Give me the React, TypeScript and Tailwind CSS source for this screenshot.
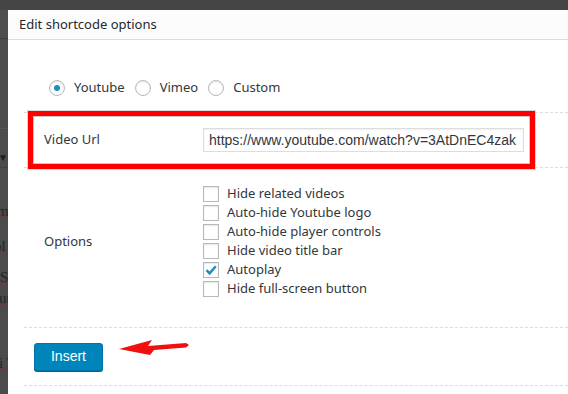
import { useState } from 'react'

const OPTIONS = [
  { label: 'Hide related videos', checked: false },
  { label: 'Auto-hide Youtube logo', checked: false },
  { label: 'Auto-hide player controls', checked: false },
  { label: 'Hide video title bar', checked: false },
  { label: 'Autoplay', checked: true },
  { label: 'Hide full-screen button', checked: false },
]

function Radio({ label, on }: { label: string; on?: boolean }) {
  return (
    <label className="flex items-center mr-[10px]">
      <span className="w-4 h-4 rounded-full border border-[#b4b9be] bg-white shadow-[inset_0_1px_2px_rgba(0,0,0,0.1)] flex items-center justify-center">
        {on && <span className="w-[6px] h-[6px] rounded-full bg-[#1e8cbe]" />}
      </span>
      <span className="ml-[9px]">{label}</span>
    </label>
  )
}

function Check({ label, checked }: { label: string; checked: boolean }) {
  return (
    <div className="h-[19px] flex items-center">
      <span className="w-4 h-4 border border-[#b4b9be] bg-white shadow-[inset_0_1px_2px_rgba(0,0,0,0.1)] flex items-center justify-center">
        {checked && (
          <svg width="14" height="14" viewBox="0 0 14 14">
            <path d="M2.5 7.2 L5.6 10.4 L11.8 3.2" fill="none" stroke="#1e8cbe" strokeWidth="2.4" />
          </svg>
        )}
      </span>
      <span className="ml-[8px]">{label}</span>
    </div>
  )
}

export default function App() {
  const [url] = useState('https://www.youtube.com/watch?v=3AtDnEC4zak')

  return (
    <div className="w-[568px] h-[394px] overflow-hidden bg-[#4b4b4b] flex flex-col font-['Noto_Sans',sans-serif]">
      {/* admin bar behind overlay */}
      <div className="h-[10px] bg-[#454545] shrink-0" />

      <div className="flex flex-1 min-h-0">
        {/* page behind the modal, dimmed */}
        <div className="w-[8px] shrink-0 overflow-hidden flex flex-col text-[#262626] font-['Liberation_Serif',serif] text-[15px] leading-none">
          <div className="h-[29px] border-b border-[#3f3f3f] bg-[#4e4e4e]" />
          <div className="h-[90px] border-b border-[#555]" />
          <div className="mt-[24px] text-[10px] text-[#1d1d1d] -ml-[2px]">▼</div>
          <div className="mt-[4px] border-b border-[#404040]" />
          <div className="mt-[36px] whitespace-nowrap -ml-[3px] underline decoration-dotted decoration-[#8a2a2a]">m</div>
          <div className="mt-[20px] whitespace-nowrap -ml-[6px] underline decoration-dotted decoration-[#8a2a2a]">ol</div>
          <div className="mt-[16px] whitespace-nowrap underline decoration-dotted decoration-[#8a2a2a]">Sh</div>
          <div className="mt-[6px] whitespace-nowrap -ml-[1px] underline decoration-dotted decoration-[#8a2a2a]">ut</div>
          <div className="mt-[50px] whitespace-nowrap -ml-[1px] underline decoration-dotted decoration-[#8a2a2a]">i T</div>
        </div>

        {/* modal */}
        <div className="flex-1 bg-white flex flex-col relative text-[13px] text-[#32373c]">
          <div className="h-[30px] shrink-0 border-b border-[#dddddd] bg-[#fcfcfc] pl-[11px] flex items-center text-[#23282d]">
            Edit shortcode options
          </div>

          <div className="pl-[16px]">
            {/* source picker */}
            <div className="h-[73px] border-b border-dashed border-[#dcdcdc] pt-[40px] pl-[25px]">
              <div className="flex items-center h-4">
                <Radio label="Youtube" on />
                <Radio label="Vimeo" />
                <Radio label="Custom" />
              </div>
            </div>

            {/* url */}
            <div className="h-[55px] border-b border-dashed border-[#dcdcdc] flex items-center">
              <div className="w-[179px] pl-[20px]">Video Url</div>
              <input
                readOnly
                value={url}
                className="w-[321px] h-[24px] border border-[#dddddd] shadow-[inset_0_1px_2px_rgba(0,0,0,0.07)] px-[5px] font-['Liberation_Sans',sans-serif] text-[14px] text-[#32373c] outline-none"
              />
            </div>

            {/* options */}
            <div className="h-[160px] border-b border-dashed border-[#dcdcdc] flex items-center pb-[12px]">
              <div className="w-[179px] pl-[20px]">Options</div>
              <div className="flex flex-col">
                {OPTIONS.map((o) => (
                  <Check key={o.label} label={o.label} checked={o.checked} />
                ))}
              </div>
            </div>

            {/* actions */}
            <div className="h-[58px] border-b border-dashed border-[#dcdcdc] flex items-center pl-[10px]">
              <button className="w-[69px] h-[28px] rounded-[3px] bg-[#0085ba] border border-[#0073aa] shadow-[0_1px_0_#006799] text-white font-['Liberation_Sans',sans-serif] text-[14px]">
                Insert
              </button>
            </div>
          </div>

          {/* annotation: red frame around url row */}
          <div className="absolute left-[20px] top-[101px] w-[507px] h-[58px] border-[5px] border-[#ff0000] shadow-[inset_0_0_0_1px_#c8c8c8,0_0_0_1px_#d8d8d8]" />

          {/* annotation: arrow to button */}
          <svg className="absolute left-[108px] top-[326px]" width="76" height="22" viewBox="0 0 76 22">
            <polygon points="3,13 36,4 32,10 70,7 73,9 70,11.5 38,14 34,19" fill="#f01010" />
          </svg>
        </div>
      </div>
    </div>
  )
}
